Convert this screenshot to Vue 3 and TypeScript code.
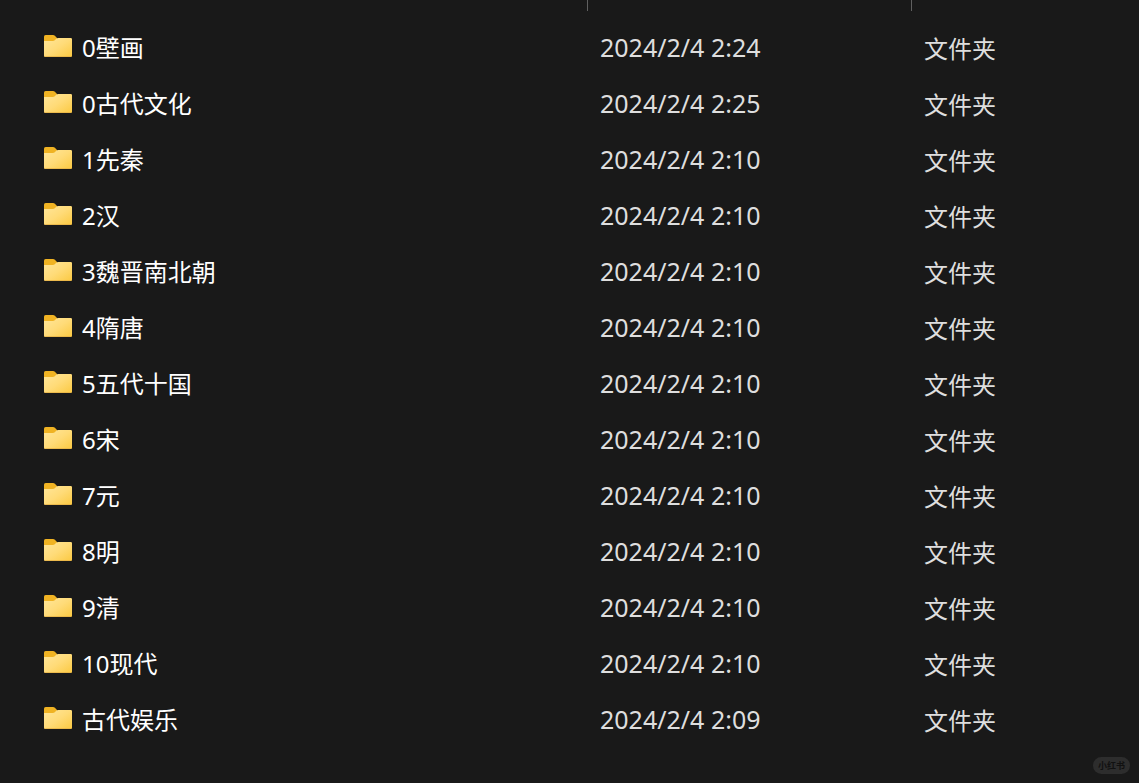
<script setup lang="ts">
interface Entry {
  name: string
  modified: string
  kind: string
}

const rows: [string, string][] = [
  ['0壁画', '2:24'],
  ['0古代文化', '2:25'],
  ['1先秦', '2:10'],
  ['2汉', '2:10'],
  ['3魏晋南北朝', '2:10'],
  ['4隋唐', '2:10'],
  ['5五代十国', '2:10'],
  ['6宋', '2:10'],
  ['7元', '2:10'],
  ['8明', '2:10'],
  ['9清', '2:10'],
  ['10现代', '2:10'],
  ['古代娱乐', '2:09'],
]

const entries: Entry[] = rows.map(([name, time]) => ({
  name,
  modified: `2024/2/4 ${time}`,
  kind: '文件夹',
}))
</script>

<template>
  <main class="explorer">
    <svg class="defs" width="0" height="0" aria-hidden="true">
      <defs>
        <linearGradient id="folder-front" x1="0" y1="0" x2="1" y2="1">
          <stop offset="0" stop-color="#ffe69a" />
          <stop offset="0.5" stop-color="#ffdb78" />
          <stop offset="1" stop-color="#fbc941" />
        </linearGradient>
      </defs>
    </svg>
    <div class="header" aria-hidden="true">
      <span class="divider"></span>
      <span class="divider"></span>
      <span></span>
    </div>
    <table class="files">
      <colgroup>
        <col class="col-name" />
        <col class="col-date" />
        <col />
      </colgroup>
      <tbody>
        <tr v-for="entry in entries" :key="entry.name">
          <td class="name">
            <div class="label">
              <svg class="folder" viewBox="0 0 28 22" aria-hidden="true">
                <path d="M0 1.6Q0 0 1.6 0H9Q10.1 0 10.9 .8L13 3V8H0Z" fill="#f0b323" />
                <path
                  d="M0 6H8.9Q10 6 10.8 5.2L12.2 3.8Q13 3 14.2 3H26.8Q28 3 28 4.2V20.8Q28 22 26.8 22H1.2Q0 22 0 20.8Z"
                  fill="url(#folder-front)"
                />
                <path d="M.4 20.9Q.8 21.6 1.6 21.6H26.4Q27.2 21.6 27.6 20.9" fill="none" stroke="#e5b045" stroke-width=".8" />
              </svg>
              <span>{{ entry.name }}</span>
            </div>
          </td>
          <td class="date">{{ entry.modified }}</td>
          <td class="kind">{{ entry.kind }}</td>
        </tr>
      </tbody>
    </table>
    <span class="badge">小红书</span>
  </main>
</template>

<style>
body {
  margin: 0;
  background: #191919;
}
</style>

<style scoped>
.explorer {
  position: relative;
  box-sizing: border-box;
  min-height: 100vh;
  background: #191919;
  color: #fff;
  font-family: "Noto Sans", "Noto Sans CJK SC", sans-serif;
  font-size: 24px;
  line-height: 32px;
}

.defs {
  position: absolute;
}

.header {
  display: grid;
  grid-template-columns: 588px 324px 1fr;
  height: 20px;
}

.divider {
  box-sizing: border-box;
  height: 11px;
  border-right: 1px solid #606060;
}

.files {
  width: 100%;
  table-layout: fixed;
  border-collapse: collapse;
}

.col-name {
  width: 588px;
}

.col-date {
  width: 324px;
}

td {
  box-sizing: border-box;
  height: 56px;
  padding: 0 12px;
  white-space: nowrap;
}

.name {
  padding-left: 44px;
}

.label {
  display: flex;
  align-items: center;
  gap: 10px;
}

.folder {
  flex: none;
  width: 28px;
  height: 22px;
  margin-bottom: 4px;
}

.date {
  padding-bottom: 2px;
  color: #dedede;
  font-size: 25px;
}

.kind {
  padding-top: 2px;
  color: #dedede;
}

.badge {
  position: absolute;
  right: 9px;
  bottom: 9px;
  padding: 0 5px;
  border-radius: 9px;
  background: #2d2d2d;
  color: #111;
  font-size: 9px;
  font-weight: 700;
  line-height: 17px;
}
</style>
